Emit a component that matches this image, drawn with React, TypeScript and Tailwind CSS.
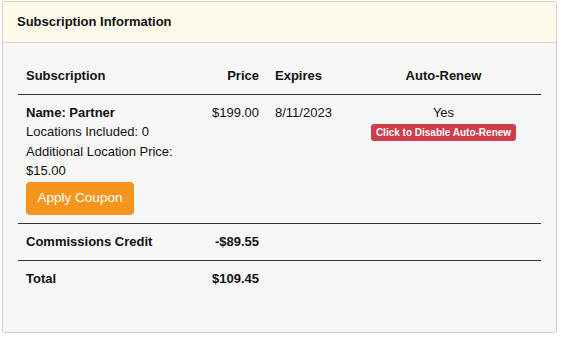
export default function App() {
  return (
    <div className="w-[561px] h-[337px] bg-white pt-[1px] pl-[2px] font-['Liberation_Sans',Arial,sans-serif] text-[13px] leading-[19.5px] text-[#111]">
      <div className="w-[555px] h-[332px] border border-[#d4d4d4] rounded-[2px] bg-[#f7f7f7] overflow-hidden">
        <div className="h-[41px] bg-[#fefbeb] border-b border-[#d4d4d4] px-[14px] flex items-center font-bold">
          Subscription Information
        </div>
        <div className="px-[15px] pt-[15px]">
          <table className="w-[523px] border-collapse">
            <colgroup>
              <col className="w-[170px]" />
              <col className="w-[79px]" />
              <col className="w-[79px]" />
              <col className="w-[195px]" />
            </colgroup>
            <thead>
              <tr className="border-b border-[#333] font-bold">
                <th className="p-2 text-left">Subscription</th>
                <th className="p-2 text-right">Price</th>
                <th className="p-2 text-left">Expires</th>
                <th className="p-2 text-center">Auto-Renew</th>
              </tr>
            </thead>
            <tbody>
              <tr className="border-b border-[#333] align-top">
                <td className="p-2">
                  <div className="font-bold">Name: Partner</div>
                  <div>Locations Included: 0</div>
                  <div>Additional Location Price: $15.00</div>
                  <button className="mt-[1px] h-[33px] w-[108px] rounded-[4px] bg-[#f7941e] text-white text-[13.5px]">
                    Apply Coupon
                  </button>
                </td>
                <td className="p-2 text-right">$199.00</td>
                <td className="p-2">8/11/2023</td>
                <td className="p-2 text-center">
                  <div>Yes</div>
                  <span className="inline-block rounded-[3px] bg-[#cf3c4b] px-[5px] text-[10px] leading-[17px] font-bold text-white">
                    Click to Disable Auto-Renew
                  </span>
                </td>
              </tr>
              <tr className="border-b border-[#333] font-bold leading-[20px]">
                <td className="p-2">Commissions Credit</td>
                <td className="p-2 text-right">-$89.55</td>
                <td className="p-2"></td>
                <td className="p-2"></td>
              </tr>
              <tr className="font-bold leading-[20px]">
                <td className="p-2">Total</td>
                <td className="p-2 text-right">$109.45</td>
                <td className="p-2"></td>
                <td className="p-2"></td>
              </tr>
            </tbody>
          </table>
        </div>
      </div>
    </div>
  )
}
